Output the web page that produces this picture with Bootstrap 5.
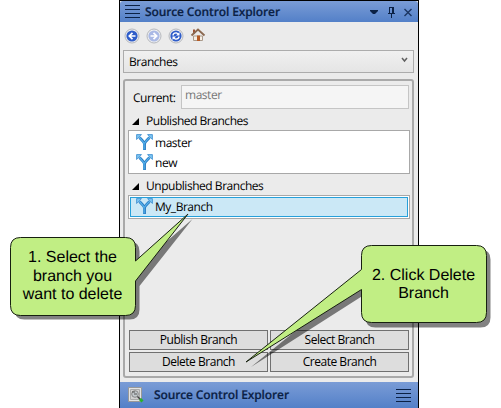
<!DOCTYPE html>
<html lang="en">
<head>
<meta charset="utf-8">
<title>Source Control Explorer</title>
<link rel="stylesheet" href="https://cdn.jsdelivr.net/npm/bootstrap@5.3.0/dist/css/bootstrap.min.css">
<style>
body{width:501px;height:408px;background:#fff;color:#000;font:12px/16px "Open Sans","Noto Sans",sans-serif;overflow:hidden;text-rendering:geometricPrecision}
svg{display:block;flex:none}
.explorer{width:300px;height:408px;margin-left:119px;border:1px solid #000;background:#ebebeb}
.title-strip{height:21px;background:linear-gradient(#7a9cd6,#5380c8);border-radius:3px 3px 0 0;color:#0b2145}
.strip-text{font-weight:600;font-size:12px;letter-spacing:-.12px;margin-left:5px;white-space:nowrap;-webkit-text-stroke:.2px #0b2145}
.foot-strip .strip-text{margin-left:9px}
.tools{height:28px}
.combo{height:23px;margin:0 4px 0 3px;padding:1px 5px 0;border:1px solid #acacac;background:linear-gradient(#f0f0f0,#e5e5e5)}
.panel{height:299px;margin:6px 4px 0 3px;border:2px solid #a9a9a9;border-radius:3px}
.current-row{padding:4px 0 0 8px}
.current-label{width:48px;padding-top:5px}
.field{width:228px;height:24px;padding:1px 0 0 3px;border:1px solid #c5c5c5;background:#f5f5f5;color:#777}
.group-head{height:21px;padding-top:2px}
.group-head svg{margin:1px 7px 0}
.branches{width:282px;margin-left:3px;border:1px solid #a8a8a8;background:#fff}
.published{height:44px;padding-top:2px}
.unpublished{height:24px;padding:1px}
.branch{height:20px}
.branch svg{margin:-1px 2px 0 7px}
.branch.picked svg{margin-left:5px}
.picked{background:#cbe8f6;border:1px solid #26a0da}
.t,.action{white-space:nowrap;letter-spacing:-.47px}
.actions{display:grid;grid-template-columns:139px 139px;gap:2px 2px;margin:111px 0 0 4px}
.action{height:20px;border:1px solid #707070;border-radius:0;background:#ddd;color:#000;font-size:12px;line-height:16px;padding:1px 0}
.foot-strip{height:26px;margin-top:4px;background:linear-gradient(#7a9cd6,#5380c8);color:#0b2145}
.note{width:125px;height:78px;padding-top:2px;font:16px/18.4px "Liberation Sans",Arial,sans-serif;text-align:center}
.note-one{left:10px;top:237px}
.note-two{left:361px;top:245px}
</style>
<script src="https://cdn.jsdelivr.net/npm/bootstrap@5.3.0/dist/js/bootstrap.bundle.min.js"></script>
</head>
<body class="position-relative">
<svg width="0" height="0" class="position-absolute">
<defs>
<symbol id="fork" viewBox="0 0 17 17"><path d="M8.500 16V10.500Q8.500 8.500 6.800 7L3.500 3.500M8.500 10.500Q8.500 8.500 10.200 7L13.500 3.500" fill="none" stroke="#2379c4" stroke-width="2.800"/><path d="M8.100 15.500V10.500Q8.100 9 6.800 7.400L3.500 3.500M8.500 9.500Q9 8 10.200 6.800L13.500 3.500" fill="none" stroke="#59b3ea" stroke-width="1.200"/><path d="M.6.6H5.500L.6 5.500ZM16.400.6H11.500L16.400 5.500Z" fill="#7cc6f2" stroke="#4593d2" stroke-width=".9"/></symbol>
<symbol id="bars" viewBox="0 0 15 13"><path d="M0 .5H15M0 4.500H15M0 8.500H15M0 12.500H15" stroke="#0b2145"/></symbol>
</defs>
</svg>

<main class="explorer">
  <header class="title-strip d-flex align-items-center">
    <svg class="ms-1" width="16" height="13" viewBox="-1 0 16 13"><use href="#bars" width="15" height="13"/></svg>
    <span class="strip-text">Source Control Explorer</span>
    <svg class="ms-auto" width="48" height="21" viewBox="370 1 48 21"><path d="M370 10H378V11L375 14H373L370 11Z" fill="#0b2145"/><path d="M389.500 7V13M393.500 7V13M389 7.500H394M388 13.500H395M391.500 14V18" fill="none" stroke="#0b2145"/><path d="M392.500 8V13" stroke="#0b2145"/><path d="M404.500 9L411.500 16M411.500 9L404.500 16" stroke="#1b3561" stroke-width="1.400"/></svg>
  </header>
  <nav class="tools">
    <svg width="90" height="28" viewBox="120 22 90 28">
      <g fill="#f0f0f0" stroke="#b5b8be"><circle cx="132" cy="36" r="7"/><circle cx="154" cy="36" r="7"/><circle cx="176" cy="36" r="7"/></g>
      <g fill="#2f5dc9"><circle cx="132" cy="36" r="5.600"/><circle cx="154" cy="36" r="5.600" fill="#aab9e5"/><circle cx="176" cy="36" r="5.600"/></g>
      <path d="M135.500 36H129.500M132.500 32.800L129.300 36L132.500 39.200M150.500 36H156.500M153.500 32.800L156.700 36L153.500 39.200" fill="none" stroke="#fff" stroke-width="1.700"/>
      <path d="M172.800 35.500Q173.500 32.700 176.500 33L178.500 34M179.200 36.500Q178.500 39.300 175.500 39L173.500 38" fill="none" stroke="#fff" stroke-width="1.300"/><path d="M179.500 32V35.500H176ZM172.500 40V36.500H176Z" fill="#fff"/>
      <path d="M193.500 36H202.500V40.500H193.500Z" fill="#f6eee3" stroke="#aa9a8b"/><path d="M193 29.500H195V33.500H193Z" fill="#9d5234"/><path d="M191.500 35.500L198 29.500L204.500 35.500" fill="none" stroke="#8b6950" stroke-width="1.800"/><path d="M197 35.500H200V41H197Z" fill="#b55b25"/>
    </svg>
  </nav>
  <div class="combo d-flex align-items-center justify-content-between">
    <span class="t">Branches</span>
    <svg class="mb-1" width="7" height="6"><path d="M1 1L3.500 4L6 1" fill="none" stroke="#606060" stroke-width="1.500"/></svg>
  </div>
  <section class="panel">
    <div class="current-row d-flex">
      <span class="t current-label">Current:</span>
      <div class="field"><span class="t d-block">master</span></div>
    </div>
    <div class="group-head d-flex align-items-center"><svg width="7" height="7"><path d="M7 0V7H0Z"/></svg><span class="t">Published Branches</span></div>
    <div class="branches published">
      <div class="branch d-flex align-items-center"><svg width="17" height="17"><use href="#fork"/></svg><span class="t">master</span></div>
      <div class="branch d-flex align-items-center"><svg width="17" height="17"><use href="#fork"/></svg><span class="t">new</span></div>
    </div>
    <div class="group-head d-flex align-items-center"><svg width="7" height="7"><path d="M7 0V7H0Z"/></svg><span class="t">Unpublished Branches</span></div>
    <div class="branches unpublished">
      <div class="branch picked d-flex align-items-center"><svg width="17" height="17"><use href="#fork"/></svg><span class="t">My_Branch</span></div>
    </div>
    <div class="actions">
      <button class="btn action">Publish Branch</button><button class="btn action">Select Branch</button>
      <button class="btn action">Delete Branch</button><button class="btn action">Create Branch</button>
    </div>
  </section>
  <footer class="foot-strip d-flex align-items-center">
    <svg width="18" height="18" viewBox="-7 0 25 18" style="width:25px"><path d="M1.500 1.500H14.500V15.500H1.500Z" fill="#e3e3e3" stroke="#999"/><path d="M3.500 3.500H12.500V13.500H3.500Z" fill="#d0d0d0" stroke="#aaa"/><circle cx="8" cy="8" r="3.300" fill="#c2c8cc" stroke="#888"/><path d="M5 6H8M7 8H10" stroke="#555"/><path d="M10.500 10.500L14 14" stroke="#444" stroke-width="1.500"/><path d="M13 13L15.500 15.500" stroke="#28b22c" stroke-width="3"/></svg>
    <span class="strip-text">Source Control Explorer</span>
    <svg class="ms-auto" width="22" height="13" viewBox="0 0 22 13"><use href="#bars" width="15" height="13"/></svg>
  </footer>
</main>

<svg class="position-absolute top-0 start-0" width="501" height="408" viewBox="0 0 501 408">
  <g fill="#000" fill-opacity=".49">
    <path d="M24.500 241.500H129.500Q139.500 241.500 139.500 251.500V265L192.500 219L139.500 286V309.500Q139.500 319.500 129.500 319.500H24.500Q14.500 319.500 14.500 309.500V251.500Q14.500 241.500 24.500 241.500Z"/>
    <path d="M375.500 249.500H480.500Q490.500 249.500 490.500 259.500V317.500Q490.500 327.500 480.500 327.500H375.500Q365.500 327.500 365.500 317.500V294L251 367L365.500 274V259.500Q365.500 249.500 375.500 249.500Z"/>
  </g>
  <g fill="#c1ee84" stroke="#172010">
    <path d="M20.500 237.500H125.500Q135.500 237.500 135.500 247.500V261L188 214L135.500 281V305.500Q135.500 315.500 125.500 315.500H20.500Q10.500 315.500 10.500 305.500V247.500Q10.500 237.500 20.500 237.500Z"/>
    <path d="M371.500 245.500H476.500Q486.500 245.500 486.500 255.500V312.500Q486.500 322.500 476.500 322.500H371.500Q361.500 322.500 361.500 312.500V289.500L246 362L361.500 269.500V255.500Q361.500 245.500 371.500 245.500Z"/>
  </g>
</svg>
<div class="note note-one position-absolute d-flex align-items-center justify-content-center"><span>1. Select the<br>branch you<br>want to delete</span></div>
<div class="note note-two position-absolute d-flex align-items-center justify-content-center"><span>2. Click Delete<br>Branch</span></div>
</body>
</html>
